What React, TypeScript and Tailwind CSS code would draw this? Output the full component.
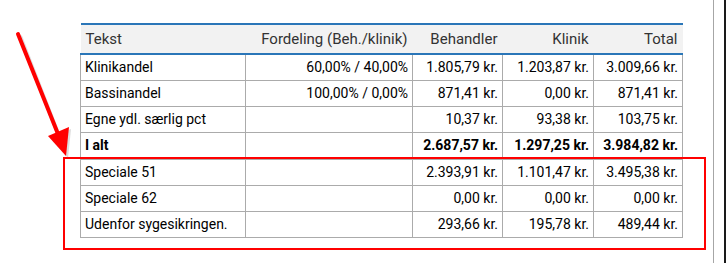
import React from 'react';

type Row = { tekst: string; fordeling: string; beh: string; klinik: string; total: string; bold?: boolean };

const rows: Row[] = [
  { tekst: 'Klinikandel', fordeling: '60,00% / 40,00%', beh: '1.805,79 kr.', klinik: '1.203,87 kr.', total: '3.009,66 kr.' },
  { tekst: 'Bassinandel', fordeling: '100,00% / 0,00%', beh: '871,41 kr.', klinik: '0,00 kr.', total: '871,41 kr.' },
  { tekst: 'Egne ydl. særlig pct', fordeling: '', beh: '10,37 kr.', klinik: '93,38 kr.', total: '103,75 kr.' },
  { tekst: 'I alt', fordeling: '', beh: '2.687,57 kr.', klinik: '1.297,25 kr.', total: '3.984,82 kr.', bold: true },
  { tekst: 'Speciale 51', fordeling: '', beh: '2.393,91 kr.', klinik: '1.101,47 kr.', total: '3.495,38 kr.' },
  { tekst: 'Speciale 62', fordeling: '', beh: '0,00 kr.', klinik: '0,00 kr.', total: '0,00 kr.' },
  { tekst: 'Udenfor sygesikringen.', fordeling: '', beh: '293,66 kr.', klinik: '195,78 kr.', total: '489,44 kr.' },
];

const headers = ['Tekst', 'Fordeling (Beh./klinik)', 'Behandler', 'Klinik', 'Total'];

const App: React.FC = () => {
  return (
    <div className="relative flex h-[263px] w-[726px] bg-white font-['Roboto',sans-serif] text-[14px]">
      {/* Main panel */}
      <div className="w-[713px] pl-[80px] pt-[23px]">
        <table className="border-collapse table-fixed w-[602px] text-black">
          <colgroup>
            <col className="w-[165px]" />
            <col className="w-[167px]" />
            <col className="w-[90px]" />
            <col className="w-[91px]" />
            <col className="w-[89px]" />
          </colgroup>
          <thead>
            <tr className="h-[30px] bg-[#f2f2f2] text-[#333] text-[15px]">
              {headers.map((h, i) => (
                <th
                  key={h}
                  className={`border-t-2 border-b-2 border-[#2a76b8] px-[5px] font-normal ${i === 0 ? 'text-left' : 'text-right'}`}
                >
                  {h}
                </th>
              ))}
            </tr>
          </thead>
          <tbody>
            {rows.map((r) => (
              <tr key={r.tekst} className={r.bold ? 'h-[27px] font-bold border-b border-b-black' : 'h-[26px]'}>
                <td className="border border-[#ababab] px-[4px] text-left">{r.tekst}</td>
                <td className="border border-[#ababab] px-[4px] text-right">{r.fordeling}</td>
                <td className="border border-[#ababab] px-[4px] text-right">{r.beh}</td>
                <td className="border border-[#ababab] px-[4px] text-right">{r.klinik}</td>
                <td className="border border-[#ababab] px-[4px] text-right">{r.total}</td>
              </tr>
            ))}
          </tbody>
        </table>
      </div>

      {/* Right panel edge */}
      <div className="w-px bg-[#a6a6a6]" />
      <div className="w-[10px]" />
      <div className="w-[2px] bg-[#1a1a1a]" />

      {/* Annotation: highlight box */}
      <div className="absolute left-[63px] top-[157px] h-[93px] w-[643px] border-2 border-[#ff0000]" />

      {/* Annotation: arrow */}
      <svg className="absolute left-0 top-0 pointer-events-none" width="726" height="263" viewBox="0 0 726 263">
        <g opacity="0.25" transform="translate(2,2)">
          <line x1="18" y1="34" x2="57" y2="134" stroke="#777" strokeWidth="4" />
          <polygon points="48,136 69,127 66,156" fill="#777" />
        </g>
        <line x1="18" y1="34" x2="58" y2="134" stroke="#ff0000" strokeWidth="4" strokeLinecap="round" />
        <polygon points="48,136 69,127 66,156" fill="#ff0000" />
      </svg>
    </div>
  );
};

export default App;
